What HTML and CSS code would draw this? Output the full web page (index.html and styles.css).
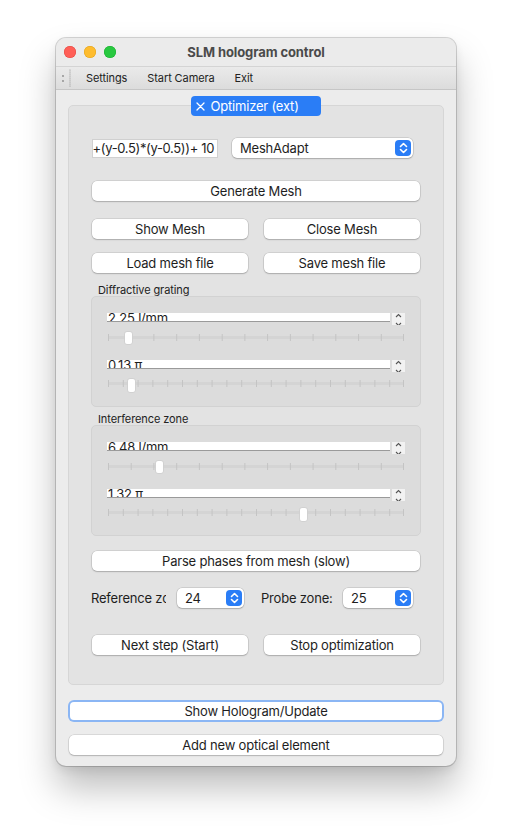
FILE: index.html
```html
<!DOCTYPE html>
<html>
<head>
<meta charset="utf-8">
<link rel="stylesheet" href="styles.css">
</head>
<body>
<div class="window">
  <div class="titlebar">
    <div class="lights">
      <span class="light red"></span><span class="light yellow"></span><span class="light green"></span>
    </div>
    <div class="title">SLM hologram control</div>
  </div>
  <div class="menubar">
    <svg class="grip" width="12" height="20" viewBox="0 0 12 20">
      <circle cx="2" cy="8" r="0.9" fill="#8a8a8a"/><circle cx="2" cy="13" r="0.9" fill="#8a8a8a"/>
      <g fill="#8a8a8a"><circle cx="9" cy="2" r="0.6"/><circle cx="9" cy="4" r="0.6"/><circle cx="9" cy="6" r="0.6"/><circle cx="9" cy="8" r="0.6"/><circle cx="9" cy="10" r="0.6"/><circle cx="9" cy="12" r="0.6"/><circle cx="9" cy="14" r="0.6"/><circle cx="9" cy="16" r="0.6"/><circle cx="9" cy="18" r="0.6"/></g>
    </svg>
    <span class="menu-item">Settings</span>
    <span class="menu-item">Start Camera</span>
    <span class="menu-item">Exit</span>
  </div>
  <div class="content">
    <div class="tabbar">
      <div class="tab">
        <svg width="9" height="9" viewBox="0 0 9 9"><path d="M1 1 L8 8 M8 1 L1 8" stroke="#fff" stroke-width="1.3" stroke-linecap="round"/></svg>
        <span>Optimizer (ext)</span>
      </div>
    </div>
    <div class="pane">
      <div class="row row1">
        <div class="lineedit"><span>sqrt((x-0.5)*(x-0.5)+(y-0.5)*(y-0.5))+ 10</span></div>
        <div class="combo combo-wide">
          <span>MeshAdapt</span>
          <span class="combo-btn"><svg width="15" height="16" viewBox="0 0 15 16"><path d="M4.5 6.5 L7.5 3.5 L10.5 6.5 M4.5 9.5 L7.5 12.5 L10.5 9.5" stroke="#fff" stroke-width="1.6" fill="none" stroke-linecap="round" stroke-linejoin="round"/></svg></span>
        </div>
      </div>
      <div class="btn gen">Generate Mesh</div>
      <div class="row row-show">
        <div class="btn half">Show Mesh</div>
        <div class="btn half">Close Mesh</div>
      </div>
      <div class="row row-load">
        <div class="btn half">Load mesh file</div>
        <div class="btn half">Save mesh file</div>
      </div>
      <div class="glabel first">Diffractive grating</div>
      <div class="group">
        <div class="spin"><div class="field"><span>2.25 l/mm</span></div><svg class="arrows" width="13" height="12" viewBox="0 0 13 12"><rect x="0" y="0" width="13" height="12" fill="#f2f2f2"/><path d="M4 4 L6.5 1.5 L9 4 M4 10 L6.5 12.5 L9 10" stroke="#555" stroke-width="1.1" fill="none"/></svg></div>
        <svg class="slider mid" width="298" height="29" viewBox="0 0 298 29">
          <rect x="1" y="5" width="296" height="3" fill="#d4d4d4"/>
          <g stroke="#c4c4c4" stroke-width="1"><path d="M1.5 3v7M24.2 3v7M46.9 3v7M69.7 3v7M92.4 3v7M115.2 3v7M137.9 3v7M160.6 3v7M183.4 3v7M206.1 3v7M228.8 3v7M251.6 3v7M274.3 3v7M296.5 3v7"/></g>
          <rect x="17.5" y="0.5" width="8" height="13" rx="2.5" fill="#fff" stroke="#c9c9c9" stroke-width="0.8"/>
        </svg>
        <div class="spin"><div class="field"><span>0.13 π</span></div><svg class="arrows" width="13" height="12" viewBox="0 0 13 12"><rect x="0" y="0" width="13" height="12" fill="#f2f2f2"/><path d="M4 4 L6.5 1.5 L9 4 M4 10 L6.5 12.5 L9 10" stroke="#555" stroke-width="1.1" fill="none"/></svg></div>
        <svg class="slider last" width="298" height="16" viewBox="0 0 298 16">
          <rect x="1" y="4" width="296" height="3" fill="#d4d4d4"/>
          <g stroke="#c4c4c4" stroke-width="1"><path d="M1.5 2v7M16.3 2v7M31.1 2v7M45.9 2v7M60.7 2v7M75.5 2v7M90.3 2v7M105.1 2v7M119.9 2v7M134.7 2v7M149.5 2v7M164.3 2v7M179.1 2v7M193.9 2v7M208.7 2v7M223.5 2v7M238.3 2v7M253.1 2v7M267.9 2v7M282.7 2v7M296.5 2v7"/></g>
          <rect x="20.5" y="0.5" width="8" height="14" rx="2.5" fill="#fff" stroke="#c9c9c9" stroke-width="0.8"/>
        </svg>
      </div>
      <div class="glabel second">Interference zone</div>
      <div class="group">
        <div class="spin"><div class="field"><span>6.48 l/mm</span></div><svg class="arrows" width="13" height="12" viewBox="0 0 13 12"><rect x="0" y="0" width="13" height="12" fill="#f2f2f2"/><path d="M4 4 L6.5 1.5 L9 4 M4 10 L6.5 12.5 L9 10" stroke="#555" stroke-width="1.1" fill="none"/></svg></div>
        <svg class="slider mid" width="298" height="29" viewBox="0 0 298 29">
          <rect x="1" y="5" width="296" height="3" fill="#d4d4d4"/>
          <g stroke="#c4c4c4" stroke-width="1"><path d="M1.5 3v7M24.2 3v7M46.9 3v7M69.7 3v7M92.4 3v7M115.2 3v7M137.9 3v7M160.6 3v7M183.4 3v7M206.1 3v7M228.8 3v7M251.6 3v7M274.3 3v7M296.5 3v7"/></g>
          <rect x="48.5" y="0.5" width="8" height="13" rx="2.5" fill="#fff" stroke="#c9c9c9" stroke-width="0.8"/>
        </svg>
        <div class="spin"><div class="field"><span>1.32 π</span></div><svg class="arrows" width="13" height="12" viewBox="0 0 13 12"><rect x="0" y="0" width="13" height="12" fill="#f2f2f2"/><path d="M4 4 L6.5 1.5 L9 4 M4 10 L6.5 12.5 L9 10" stroke="#555" stroke-width="1.1" fill="none"/></svg></div>
        <svg class="slider last" width="298" height="16" viewBox="0 0 298 16">
          <rect x="1" y="4" width="296" height="3" fill="#d4d4d4"/>
          <g stroke="#c4c4c4" stroke-width="1"><path d="M1.5 2v7M16.3 2v7M31.1 2v7M45.9 2v7M60.7 2v7M75.5 2v7M90.3 2v7M105.1 2v7M119.9 2v7M134.7 2v7M149.5 2v7M164.3 2v7M179.1 2v7M193.9 2v7M208.7 2v7M223.5 2v7M238.3 2v7M253.1 2v7M267.9 2v7M282.7 2v7M296.5 2v7"/></g>
          <rect x="192.5" y="0.5" width="8" height="14" rx="2.5" fill="#fff" stroke="#c9c9c9" stroke-width="0.8"/>
        </svg>
      </div>
      <div class="btn parse">Parse phases from mesh (slow)</div>
      <div class="row zones">
        <div class="zlabel ref">Reference zone:</div>
        <div class="combo combo-small c24">
          <span>24</span>
          <span class="combo-btn"><svg width="15" height="16" viewBox="0 0 15 16"><path d="M4.5 6.5 L7.5 3.5 L10.5 6.5 M4.5 9.5 L7.5 12.5 L10.5 9.5" stroke="#fff" stroke-width="1.6" fill="none" stroke-linecap="round" stroke-linejoin="round"/></svg></span>
        </div>
        <div class="zlabel probe">Probe zone:</div>
        <div class="combo combo-small c25">
          <span>25</span>
          <span class="combo-btn"><svg width="15" height="16" viewBox="0 0 15 16"><path d="M4.5 6.5 L7.5 3.5 L10.5 6.5 M4.5 9.5 L7.5 12.5 L10.5 9.5" stroke="#fff" stroke-width="1.6" fill="none" stroke-linecap="round" stroke-linejoin="round"/></svg></span>
        </div>
      </div>
      <div class="row row-next">
        <div class="btn half">Next step (Start)</div>
        <div class="btn half">Stop optimization</div>
      </div>
    </div>
    <div class="focusring"><div class="btn wide">Show Hologram/Update</div></div>
    <div class="btn wide addnew">Add new optical element</div>
  </div>
</div>
</body>
</html>
```
FILE: styles.css
```css
* { box-sizing: border-box; }
html, body { margin: 0; padding: 0; background: #ffffff; }
body {
  font-family: Inter, "Liberation Sans", sans-serif;
  color: #1e1e1e;
  width: 512px;
  height: 840px;
  overflow: hidden;
  letter-spacing: -0.2px;
}
.window {
  margin: 38px 0 0 56px;
  width: 400px;
  height: 728px;
  border-radius: 10px;
  background: #ececec;
  box-shadow: 0 0 0 1px rgba(0,0,0,0.16), 0 22px 36px rgba(0,0,0,0.26), 0 4px 10px rgba(0,0,0,0.08);
  overflow: hidden;
  display: flex;
  flex-direction: column;
}
.titlebar {
  height: 28px;
  background: #ebebeb;
  display: flex;
  align-items: center;
  position: relative;
}
.lights { display: flex; gap: 8px; padding-left: 8px; }
.light { width: 12px; height: 12px; border-radius: 50%; display: block; }
.red { background: #ff5f57; box-shadow: inset 0 0 0 0.5px #e2463f; }
.yellow { background: #febc2e; box-shadow: inset 0 0 0 0.5px #e1a116; }
.green { background: #28c840; box-shadow: inset 0 0 0 0.5px #14ae2a; }
.title {
  position: absolute;
  left: 0; right: 0; top: 0;
  text-align: center;
  line-height: 28px;
  font-weight: 700;
  font-size: 13px;
  color: #4a4a4a;
  letter-spacing: -0.1px;
}
.menubar {
  height: 24px;
  background: linear-gradient(#eaeaea, #dcdcdc);
  border-top: 1px solid #d4d4d4;
  border-bottom: 1px solid #c6c6c6;
  display: flex;
  align-items: center;
  font-size: 11px;
  color: #222;
  letter-spacing: -0.1px;
}
.grip { margin-left: 5px; margin-right: 13px; }
.menu-item { margin-right: 20px; }
.content {
  flex: 1;
  padding: 6px 12px 0 12px;
  display: flex;
  flex-direction: column;
}
.tabbar {
  height: 20px;
  display: flex;
  justify-content: center;
  position: relative;
  z-index: 2;
}
.tab {
  width: 130px;
  height: 20px;
  margin-left: -1px;
  background: #2a7df6;
  border-radius: 4px;
  color: #fff;
  font-size: 13px;
  display: flex;
  align-items: center;
  padding-left: 5px;
  gap: 6px;
}
.pane {
  margin-top: -11px;
  height: 580px;
  background: #e3e3e3;
  border: 1px solid #d6d6d6;
  border-radius: 5px;
  padding: 32px 23px 0 23px;
  display: flex;
  flex-direction: column;
}
.row { display: flex; align-items: center; }
.row1 { height: 20px; gap: 14px; }
.lineedit {
  width: 126px;
  height: 19px;
  background: #fff;
  border: 1px solid #d0d0d0;
  overflow: hidden;
  white-space: nowrap;
  display: flex;
  justify-content: flex-end;
  align-items: center;
  padding-right: 3px;
  font-size: 13px;
  letter-spacing: -0.35px;
}
.combo {
  height: 20px;
  background: #fff;
  border-radius: 5px;
  box-shadow: 0 0 0 0.5px rgba(0,0,0,0.18), 0 1px 1.5px rgba(0,0,0,0.18);
  display: flex;
  align-items: center;
  justify-content: space-between;
  font-size: 13px;
  padding: 0 2px 0 8px;
}
.combo-wide { width: 181px; }
.combo-btn {
  width: 16px;
  height: 16px;
  background: #2a7df6;
  border-radius: 4px;
  display: flex;
  align-items: center;
  justify-content: center;
}
.btn {
  height: 20px;
  background: #fff;
  border-radius: 5px;
  box-shadow: 0 0 0 0.5px rgba(0,0,0,0.16), 0 1px 1.5px rgba(0,0,0,0.18);
  font-size: 13px;
  display: flex;
  align-items: center;
  justify-content: center;
  white-space: nowrap;
}
.gen { margin-top: 23px; }
.row-show { margin-top: 18px; justify-content: space-between; }
.row-load { margin-top: 14px; justify-content: space-between; }
.half { width: 156px; }
.glabel {
  font-size: 11px;
  line-height: 12px;
  height: 12px;
  padding-left: 6px;
  color: #222;
  letter-spacing: -0.1px;
}
.glabel.first { margin-top: 11px; }
.glabel.second { margin-top: 6px; }
.group {
  margin: 0 -1px;
  background: #dcdcdc;
  border: 1px solid #d2d2d2;
  border-radius: 5px;
  padding: 16px 15px 12px 15px;
  display: flex;
  flex-direction: column;
}
.spin {
  height: 18px;
  display: flex;
  align-items: flex-start;
  gap: 2px;
}
.field {
  width: 283px;
  height: 9px;
  background: #fff;
  border-bottom: 1px solid #9a9a9a;
  overflow: hidden;
  font-size: 13px;
  line-height: 13px;
  padding-left: 1px;
}
.field span { display: block; margin-top: -1px; }
.arrows { display: block; }
.slider { display: block; }
.parse { margin-top: 15px; }
.zones { margin-top: 17px; height: 20px; font-size: 13px; }
.zlabel { white-space: nowrap; overflow: hidden; }
.ref { width: 75px; margin-left: -1px; }
.c24 { width: 67px; margin-left: 11px; }
.probe { margin-left: 17px; width: 72px; }
.c25 { width: 70px; margin-left: 10px; }
.row-next { margin-top: 27px; justify-content: space-between; }
.focusring {
  margin-top: 15px;
  height: 22px;
  border-radius: 6px;
  background: #8bb6f4;
  padding: 2px;
}
.focusring .btn { height: 18px; border-radius: 4px; box-shadow: none; }
.addnew { margin-top: 13px; margin-left: 1px; margin-right: 1px; }
```
